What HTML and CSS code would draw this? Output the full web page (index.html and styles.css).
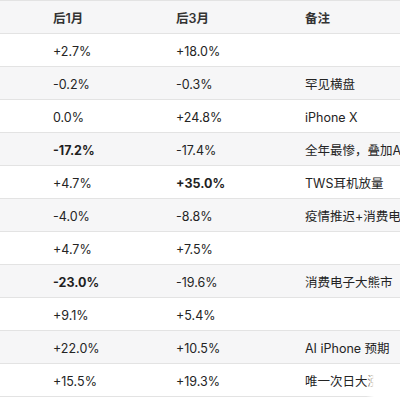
FILE: index.html
```
<!DOCTYPE html>
<html lang="zh-CN">
<head>
<meta charset="utf-8">
<link rel="stylesheet" href="styles.css">
</head>
<body>
<div class="wrap">
<table class="tbl">
<thead>
<tr><th class="lead"></th><th class="c1">后1月</th><th class="c2">后3月</th><th class="c3">备注</th></tr>
</thead>
<tbody>
<tr><td class="lead"></td><td>+2.7%</td><td>+18.0%</td><td></td></tr>
<tr><td class="lead"></td><td>-0.2%</td><td>-0.3%</td><td>罕见横盘</td></tr>
<tr><td class="lead"></td><td>0.0%</td><td>+24.8%</td><td>iPhone X</td></tr>
<tr><td class="lead"></td><td><b>-17.2%</b></td><td>-17.4%</td><td>全年最惨，叠加AI泡沫</td></tr>
<tr><td class="lead"></td><td>+4.7%</td><td><b>+35.0%</b></td><td>TWS耳机放量</td></tr>
<tr><td class="lead"></td><td>-4.0%</td><td>-8.8%</td><td>疫情推迟+消费电子</td></tr>
<tr><td class="lead"></td><td>+4.7%</td><td>+7.5%</td><td></td></tr>
<tr><td class="lead"></td><td><b>-23.0%</b></td><td>-19.6%</td><td>消费电子大熊市</td></tr>
<tr><td class="lead"></td><td>+9.1%</td><td>+5.4%</td><td></td></tr>
<tr><td class="lead"></td><td>+22.0%</td><td>+10.5%</td><td>AI iPhone 预期</td></tr>
<tr><td class="lead"></td><td>+15.5%</td><td>+19.3%</td><td>唯一次日大涨</td></tr>
</tbody>
</table>
<div class="fade"></div>
</div>
</body>
</html>
```
FILE: styles.css
```
html, body {
  margin: 0;
  padding: 0;
  background: #fff;
  overflow: hidden;
}
.wrap {
  position: relative;
  width: 400px;
  height: 400px;
  overflow: hidden;
}
.tbl {
  border-collapse: collapse;
  table-layout: fixed;
  width: 600px;
  font-family: "Inter", "Noto Sans CJK SC", sans-serif;
  font-size: 12.5px;
  color: #242424;
}
.tbl th, .tbl td {
  height: 33px;
  padding: 3px 12px 0;
  line-height: 16px;
  text-align: left;
  white-space: nowrap;
  overflow: hidden;
  border-top: 1px solid #e3e3e3;
  border-bottom: 1px solid #e3e3e3;
  box-sizing: border-box;
}
.tbl th {
  font-weight: 600;
  color: #333;
  background: #f6f6f7;
}
.tbl .lead { width: 41px; padding: 0; }
.tbl .c1 { width: 123px; }
.tbl .c2 { width: 129px; }
.tbl .c3 { width: 307px; }
.tbl tbody tr:nth-child(even) td { background: #f6f6f7; }
.tbl b { font-weight: 700; color: #1f1f1f; }
.fade {
  position: absolute;
  right: 0;
  top: 366px;
  width: 34px;
  height: 34px;
  background: linear-gradient(to right, rgba(255,255,255,0) 0, #fff 8px);
}
```
